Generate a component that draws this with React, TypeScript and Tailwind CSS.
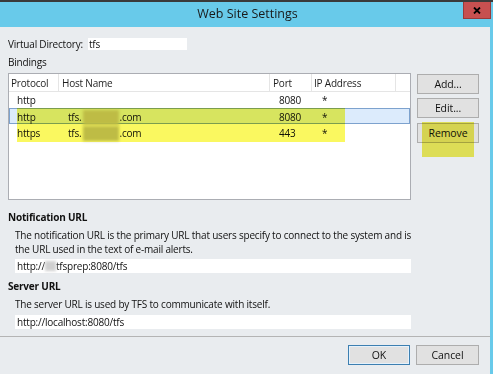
import React from 'react';

const FONT = "font-['Open_Sans','Noto_Sans',sans-serif]";

function Blur({ w, h = 13, tone = 'bg-[#bdbdbd]' }: { w: number; h?: number; tone?: string }) {
  return <span className={`inline-block align-middle ${tone} blur-[1.5px]`} style={{ width: w, height: h }} />;
}

function WinButton({ label, primary }: { label: string; primary?: boolean }) {
  return (
    <button
      type="button"
      className={`h-[20px] w-full bg-[#e1e1e1] text-[10.5px] tracking-[-0.1px] text-[#111] border ${
        primary ? 'border-[#3c7fb1] shadow-[inset_0_0_0_1px_#e5f1fb]' : 'border-[#adadad]'
      }`}
    >
      {label}
    </button>
  );
}

const COLS = 'grid grid-cols-[50px_211px_42px_84px_1fr]';

export default function App() {
  const rows = [
    { protocol: 'http', host: false, port: '8080', ip: '*' },
    { protocol: 'http', host: true, port: '8080', ip: '*', selected: true },
    { protocol: 'https', host: true, port: '443', ip: '*' },
  ];

  return (
    <div className={`${FONT} w-[493px] h-[374px] bg-[#68caea] border-t-2 border-[#3a3a3a] flex flex-col overflow-hidden`}>
      {/* title bar */}
      <div className="relative h-[25px] flex items-center justify-center">
        <span className="text-[12.5px] text-[#1a1a1a] -mt-[1px] ml-[2px]">Web Site Settings</span>
        <div className="absolute right-[2px] top-0 w-[28px] h-[17px] bg-[#c75050] border border-[#9a3a3a] border-t-0 flex items-center justify-center">
          <svg width="8" height="7" viewBox="0 0 8 7">
            <path d="M1 0.5 L7 6.5 M7 0.5 L1 6.5" stroke="#000" strokeWidth="1.8" />
          </svg>
        </div>
      </div>

      {/* body */}
      <div className="flex-1 mr-[3px] bg-[#e9ecef] flex flex-col text-[10px] tracking-[-0.2px] text-[#111] leading-[14px]">
        <div className="pl-[8px] pr-[11px] flex flex-col">
          <div className="mt-[11px] flex items-center h-[12px]">
            <span className="w-[80px] shrink-0 whitespace-nowrap">Virtual Directory:</span>
            <div className="w-[99px] h-[12px] bg-white flex items-center pl-[1px]">tfs</div>
          </div>

          <div className="mt-[5px]">Bindings</div>

          <div className="mt-[4px] flex">
            <div className="relative w-[403px] h-[127px] bg-white border border-[#abadb3]">
              <div className={`${COLS} h-[18px] border-b border-[#e5e5e5] text-[#1e1e1e]`}>
                <div className="pl-[2px] border-r border-[#e5e5e5] flex items-center">Protocol</div>
                <div className="pl-[3px] border-r border-[#e5e5e5] flex items-center">Host Name</div>
                <div className="pl-[3px] border-r border-[#e5e5e5] flex items-center">Port</div>
                <div className="pl-[2px] border-r border-[#e5e5e5] flex items-center">IP Address</div>
                <div />
              </div>
              {rows.map((r, i) => (
                <div
                  key={i}
                  className={`${COLS} h-[16px] ${r.selected ? 'bg-[#dcebfc] border border-[#7da2ce]' : 'border border-transparent'}`}
                >
                  <div className="pl-[7px] flex items-center">{r.protocol}</div>
                  <div className="pl-[8px] flex items-center">
                    {r.host && (
                      <>
                        tfs.
                        <span className="mx-[1px]">
                          <Blur w={36} h={15} tone="bg-[#c2c2b8]" />
                        </span>
                        .com
                      </>
                    )}
                  </div>
                  <div className="pl-[8px] flex items-center">{r.port}</div>
                  <div className="pl-[9px] flex items-center">{r.ip}</div>
                  <div />
                </div>
              ))}
              {/* highlighter mark */}
              <div className="absolute left-[8px] top-[34px] w-[328px] h-[34px] bg-[#faf860] mix-blend-multiply" />
            </div>

            <div className="ml-[6px] w-[62px] flex flex-col pt-[1px]">
              <WinButton label="Add..." />
              <div className="mt-[4px]">
                <WinButton label="Edit..." />
              </div>
              <div className="relative mt-[5px]">
                <WinButton label="Remove" />
                <div className="absolute left-[5px] right-[5px] -top-[1px] h-[35px] bg-[#f2ef5c] mix-blend-multiply" />
              </div>
            </div>
          </div>

          <div className="mt-[10px] font-bold">Notification URL</div>
          <div className="mt-[4px] pl-[7px]">
            The notification URL is the primary URL that users specify to connect to the system and is
            <br />
            the URL used in the text of e-mail alerts.
          </div>
          <div className="mt-[3px] ml-[7px] w-[396px] h-[14px] bg-white flex items-center pl-[2px]">
            http://
            <Blur w={11} h={10} tone="bg-[#cfcfcf]" />
            tfsprep:8080/tfs
          </div>

          <div className="mt-[6px] font-bold">Server URL</div>
          <div className="mt-[4px] pl-[7px]">The server URL is used by TFS to communicate with itself.</div>
          <div className="mt-[4px] ml-[7px] w-[396px] h-[14px] bg-white flex items-center pl-[2px]">
            http://localhost:8080/tfs
          </div>
        </div>

        <div className="mt-[7px] h-px bg-[#b4b4b4]" />

        <div className="mt-[8px] flex justify-end pr-[11px] gap-[6px]">
          <div className="w-[62px]">
            <WinButton label="OK" primary />
          </div>
          <div className="w-[63px]">
            <WinButton label="Cancel" />
          </div>
        </div>
      </div>
    </div>
  );
}
